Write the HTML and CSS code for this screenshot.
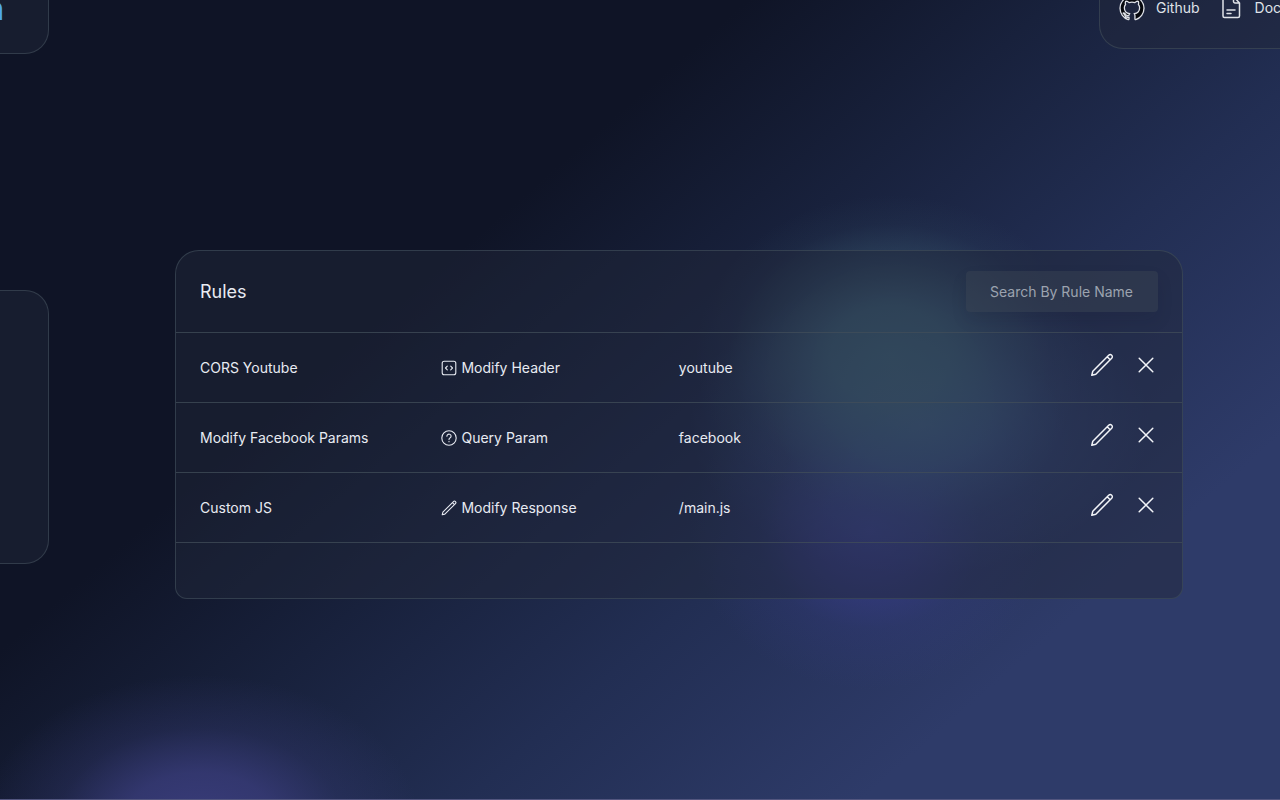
FILE: index.html
```html
<!DOCTYPE html>
<html lang="en">
<head>
<meta charset="utf-8">
<meta name="viewport" content="width=device-width, initial-scale=1">
<title>Rules</title>
<link rel="stylesheet" href="styles.css">
</head>
<body>
<svg class="sprite" aria-hidden="true">
  <symbol id="pen" viewBox="0 0 24 24"><path d="M1.800 22.200 2.800 18.200 18.700 2.300a2.120 2.120 0 0 1 3 3L5.800 21.200zM17.200 3.800l3 3"/></symbol>
  <symbol id="cross" viewBox="0 0 24 24"><path d="M5.200 5.200 18.800 18.800M18.800 5.200 5.200 18.800"/></symbol>
  <symbol id="code" viewBox="0 0 16 16"><rect x="1.200" y="1.200" width="13.600" height="13.600" rx="2"/><path d="M6.300 6.200 4.500 8l1.800 1.800M9.700 6.200 11.500 8l-1.800 1.800"/></symbol>
  <symbol id="help" viewBox="0 0 16 16"><circle cx="8" cy="8" r="7.200"/><path d="M5.900 6.200a2.100 2 0 1 1 3.300 1.600C8.300 8.300 8 8.600 8 9.400M8 11.400v.4"/></symbol>
  <symbol id="github" viewBox="-1 -1 26 26"><path fill="#05070c" d="M12 .297c-6.630 0-12 5.373-12 12 0 5.303 3.438 9.800 8.205 11.385.6.113.82-.258.82-.577 0-.285-.01-1.040-.015-2.040-3.338.724-4.042-1.610-4.042-1.610C4.422 18.070 3.633 17.700 3.633 17.700c-1.087-.744.084-.729.084-.729 1.205.084 1.838 1.236 1.838 1.236 1.070 1.835 2.809 1.305 3.495.998.108-.776.417-1.305.76-1.605-2.665-.3-5.466-1.332-5.466-5.930 0-1.310.465-2.380 1.235-3.220-.135-.303-.54-1.523.105-3.176 0 0 1.005-.322 3.300 1.230.96-.267 1.980-.399 3-.405 1.020.006 2.040.138 3 .405 2.280-1.552 3.285-1.230 3.285-1.230.645 1.653.24 2.873.12 3.176.765.840 1.230 1.910 1.230 3.220 0 4.610-2.805 5.625-5.475 5.920.42.360.81 1.096.81 2.220 0 1.606-.015 2.896-.015 3.286 0 .315.210.690.825.570C20.565 22.092 24 17.592 24 12.297c0-6.627-5.373-12-12-12"/></symbol>
  <symbol id="doc" viewBox="0 0 24 24"><path d="M3 .5h10.500L19.500 7v13a1.500 1.500 0 0 1-1.500 1.500h-13.500A1.500 1.500 0 0 1 3 20zM13.500 .5V5.500A1.500 1.500 0 0 0 15 7H19.500M7 14h8M7 17.500h4"/></symbol>
</svg>
<header class="topbar">
  <div class="card brand"><span class="brand-name">n</span></div>
  <nav class="card links">
    <a href="#"><svg class="icon icon-lg"><use href="#github"/></svg>Github</a>
    <a href="#"><svg class="icon icon-md"><use href="#doc"/></svg>Docs</a>
  </nav>
</header>
<main class="layout">
  <aside class="card side"></aside>
  <section class="card panel">
    <div class="panel-head">
      <h1>Rules</h1>
      <input class="search" type="text" placeholder="Search By Rule Name" aria-label="Search By Rule Name">
    </div>
    <table class="rules">
      <tbody>
        <tr><td class="name">CORS Youtube</td><td class="type"><span class="tag"><svg class="icon icon-sm"><use href="#code"/></svg>Modify Header</span></td><td>youtube</td>
          <td class="actions"><div class="buttons"><button aria-label="Edit"><svg class="icon icon-md"><use href="#pen"/></svg></button><button aria-label="Delete"><svg class="icon icon-md"><use href="#cross"/></svg></button></div></td></tr>
        <tr><td class="name">Modify Facebook Params</td><td class="type"><span class="tag"><svg class="icon icon-sm"><use href="#help"/></svg>Query Param</span></td><td>facebook</td>
          <td class="actions"><div class="buttons"><button aria-label="Edit"><svg class="icon icon-md"><use href="#pen"/></svg></button><button aria-label="Delete"><svg class="icon icon-md"><use href="#cross"/></svg></button></div></td></tr>
        <tr><td class="name">Custom JS</td><td class="type"><span class="tag"><svg class="icon icon-sm icon-pen"><use href="#pen"/></svg>Modify Response</span></td><td>/main.js</td>
          <td class="actions"><div class="buttons"><button aria-label="Edit"><svg class="icon icon-md"><use href="#pen"/></svg></button><button aria-label="Delete"><svg class="icon icon-md"><use href="#cross"/></svg></button></div></td></tr>
      </tbody>
    </table>
    <div class="panel-foot"></div>
  </section>
</main>
</body>
</html>
```
FILE: styles.css
```css
* { box-sizing: border-box; }

body {
  margin: 0;
  min-height: 100vh;
  overflow: hidden;
  color: #e8ebf2;
  font: 14px/20px Inter, "Liberation Sans", sans-serif;
  border-bottom: 1px solid #53567f;
  background:
    radial-gradient(ellipse 195px 160px at 890px 355px, rgba(67, 106, 124, .85) 0%, rgba(67, 106, 124, .74) 30%, rgba(67, 106, 124, .36) 58%, rgba(67, 106, 124, .08) 82%, rgba(67, 106, 124, 0) 100%),
    radial-gradient(ellipse 230px 150px at 920px 425px, rgba(66, 94, 146, .85) 0%, rgba(66, 94, 146, .65) 30%, rgba(66, 94, 146, .25) 62%, rgba(66, 94, 146, 0) 100%),
    radial-gradient(ellipse 180px 160px at 870px 530px, rgba(58, 62, 142, .9) 0%, rgba(58, 62, 142, .65) 30%, rgba(58, 62, 142, .2) 62%, rgba(58, 62, 142, 0) 100%),
    radial-gradient(ellipse 220px 150px at 200px 825px, rgba(57, 60, 122, 1) 0%, rgba(57, 60, 122, .8) 35%, rgba(57, 60, 122, .28) 65%, rgba(57, 60, 122, 0) 100%),
    linear-gradient(139deg, #0f1426 0%, #0f1426 34%, #18213c 48%, #222e53 63%, #2e3b69 81%, #2e3b69 100%);
}

.sprite { position: absolute; width: 0; height: 0; }

.card {
  background: rgba(34, 40, 58, .48);
  border: 1px solid rgba(65, 78, 90, .65);
}

.icon {
  flex: none;
  fill: none;
  stroke: currentColor;
  stroke-width: 1.5;
  stroke-linecap: round;
  stroke-linejoin: round;
}
.icon-sm { width: 16px; height: 16px; stroke-width: 1.1; }
.icon-md { width: 24px; height: 24px; }
.icon-lg { width: 26px; height: 26px; stroke-width: 1.3; }
.icon-pen { stroke-width: 1.6; }

.topbar { display: flex; justify-content: space-between; align-items: flex-start; }

.brand {
  display: flex;
  justify-content: flex-end;
  width: 49px;
  height: 54px;
  padding-right: 44px;
  overflow: hidden;
  border-width: 0 1px 1px 0;
  border-bottom-right-radius: 24px;
}
.brand-name { color: #4da8ee; font-size: 32px; line-height: 18px; font-weight: 700; }

.links {
  display: flex;
  gap: 20px;
  width: 181px;
  height: 49px;
  padding-left: 19px;
  overflow: hidden;
  border-width: 0 0 1px 1px;
  border-bottom-left-radius: 24px;
}
.links a {
  display: flex;
  align-items: center;
  gap: 11px;
  height: 15px;
  color: #dfe2e8;
  text-decoration: none;
}

.layout {
  display: grid;
  grid-template-columns: 49px 1fr;
  column-gap: 126px;
  align-items: start;
  padding: 196px 97px 0 0;
}

.side {
  height: 274px;
  margin-top: 40px;
  border-left: 0;
  border-radius: 0 24px 24px 0;
}

.panel { border-radius: 24px 24px 12px 12px; }

.panel-head {
  display: flex;
  align-items: center;
  justify-content: space-between;
  padding: 20px 24px;
}
.panel-head h1 { margin: 0; font-size: 18px; line-height: 28px; font-weight: 400; }

.search {
  width: 192px;
  height: 41px;
  padding: 0 24px;
  border: 0;
  border-radius: 4px;
  background: rgba(55, 65, 81, .5);
  box-shadow: 0 8px 16px rgba(15, 20, 36, .1);
  color: inherit;
  font: inherit;
}
.search::placeholder { color: #9ca3af; opacity: 1; }

.rules { width: 100%; border-collapse: separate; border-spacing: 0; table-layout: fixed; }
.rules td {
  height: 70px;
  padding: 0 0 0 24px;
  border-top: 1px solid rgba(65, 78, 90, .75);
}
.rules .name { width: 24%; }
.rules .type { width: 23.6%; }
.rules .actions { padding: 0 24px 5px 0; }
.tag { display: flex; align-items: center; gap: 4px; }
.buttons { display: flex; justify-content: flex-end; gap: 20px; }
.buttons button {
  display: flex;
  padding: 0;
  border: 0;
  background: none;
  color: #f3f5f9;
  cursor: pointer;
}

.panel-foot { height: 56px; border-top: 1px solid rgba(65, 78, 90, .75); }
```
